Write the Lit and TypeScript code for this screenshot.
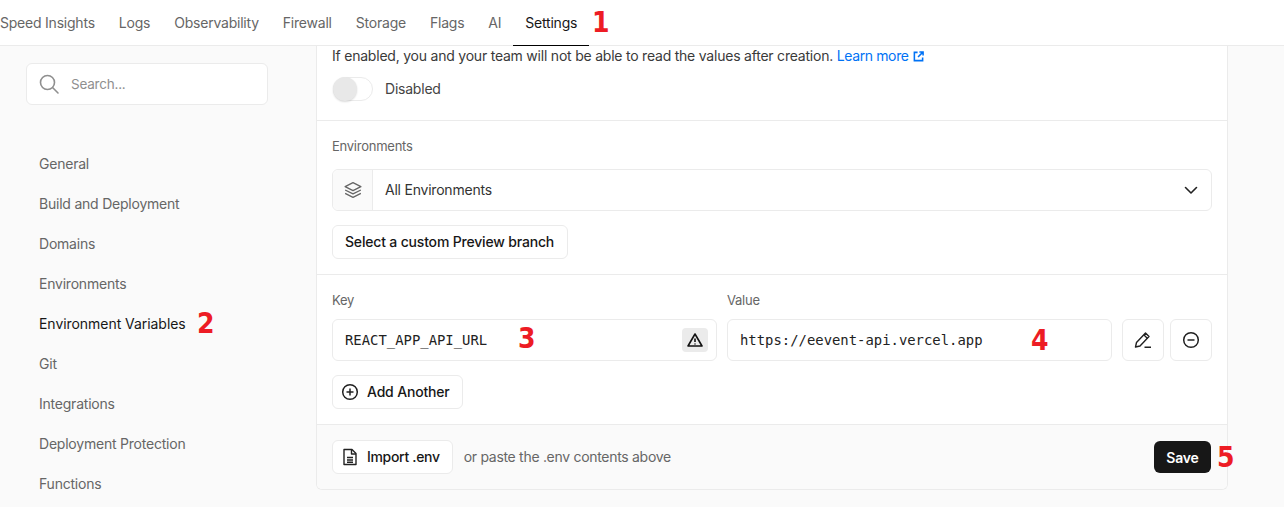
import { LitElement, html, css } from "lit";
import { customElement } from "lit/decorators.js";

const tabs = ["Speed Insights", "Logs", "Observability", "Firewall", "Storage", "Flags", "AI", "Settings"];
const nav = ["General", "Build and Deployment", "Domains", "Environments", "Environment Variables", "Git", "Integrations", "Deployment Protection", "Functions"];

@customElement("app-root")
export class AppRoot extends LitElement {
  static styles = css`
    :host { display: block; position: relative; width: 1284px; height: 507px; overflow: hidden; background: #fafafa; font-family: Inter, "Liberation Sans", sans-serif; font-size: 14px; color: #171717; letter-spacing: -0.22px; }
    svg { display: block; flex: none; }
    .top { height: 45px; background: #fff; border-bottom: 1px solid #ebebeb; display: flex; margin-bottom: 0; }
    .tabs { display: flex; margin-left: -12px; }
    .tab { padding: 0 12px; height: 45px; line-height: 46px; color: #666; white-space: nowrap; box-sizing: content-box; border-bottom: 2px solid transparent; margin-bottom: -1px; }
    .tab.on { color: #171717; border-bottom-color: #000; }
    .body { display: flex; height: 461px; }
    aside { width: 316px; flex: none; padding: 17px 0 0 26px; box-sizing: border-box; }
    .search { width: 242px; height: 42px; box-sizing: border-box; background: #fff; border: 1px solid #ebebeb; border-radius: 6px; display: flex; align-items: center; padding: 0 0 0 11px; gap: 11px; color: #8f8f8f; font-size: 13.5px; }
    .menu { margin: 39px 0 0 13px; display: flex; flex-direction: column; }
    .menu div { height: 40px; line-height: 40px; color: #666; white-space: nowrap; }
    .menu .on { color: #171717; letter-spacing: -0.05px; }
    .card { width: 912px; height: 444px; box-sizing: border-box; background: #fff; border: 1px solid #ebebeb; border-top: 0; border-radius: 0 0 6px 6px; display: flex; flex-direction: column; overflow: hidden; }
    .s1 { height: 75px; box-sizing: border-box; border-bottom: 1px solid #ebebeb; padding: 0 15px; }
    .note { line-height: 20px; color: #3a3a3a; white-space: nowrap; }
    .note a { color: #0072f5; display: inline-flex; align-items: center; gap: 4px; letter-spacing: -0.38px; }
    .toggle { display: flex; align-items: center; gap: 12px; margin: 11px 0 0 1px; color: #444; line-height: 22px; }
    .sw { width: 40px; height: 24px; box-sizing: border-box; border: 1px solid #ebebeb; border-radius: 12px; background: #fff; display: flex; }
    .knob { width: 24px; height: 24px; margin: -1px; border-radius: 50%; background: #e8e8e8; box-shadow: 0 1px 2px rgba(0,0,0,.15); }
    .s2 { height: 154px; box-sizing: border-box; border-bottom: 1px solid #ebebeb; padding: 15px 15px 0; }
    .label { font-size: 13px; line-height: 20px; color: #666; letter-spacing: -0.25px; }
    .select { margin-top: 13px; height: 42px; box-sizing: border-box; border: 1px solid #ebebeb; border-radius: 6px; display: flex; align-items: center; }
    .pre { width: 40px; height: 40px; box-sizing: border-box; background: #fafafa; border-right: 1px solid #ebebeb; border-radius: 6px 0 0 6px; display: flex; align-items: center; justify-content: center; flex: none; }
    .select span { flex: 1; padding: 0 0 2px 12px; color: #333; }
    .select svg.chev { margin-right: 12px; }
    .btn { display: inline-flex; align-items: center; height: 34px; box-sizing: border-box; background: #fff; border: 1px solid #ebebeb; border-radius: 6px; padding: 0 13px 2px 12px; font-weight: 450; letter-spacing: -0.18px; white-space: nowrap; color: #171717; }
    .btn svg { margin-top: 2px; }
    .s2 .btn { margin-top: 14px; }
    .s3 { height: 150px; box-sizing: border-box; border-bottom: 1px solid #ebebeb; padding: 15px 15px 0; }
    .cols { display: flex; gap: 10px; }
    .cols .key { width: 385px; }
    .cols .val { width: 385px; }
    .field { margin-top: 9px; height: 42px; box-sizing: border-box; border: 1px solid #ebebeb; border-radius: 6px; display: flex; align-items: center; justify-content: space-between; padding: 0 8px 0 12px; font-family: "DejaVu Sans Mono", monospace; font-size: 13.9px; letter-spacing: 0; color: #222; white-space: nowrap; }
    .warn { width: 26px; height: 24px; border-radius: 4px; background: #ebebeb; display: flex; align-items: center; justify-content: center; }
    .acts { display: flex; gap: 6px; margin-left: 0; padding-top: 29px; }
    .icon { width: 42px; height: 42px; box-sizing: border-box; border: 1px solid #ebebeb; border-radius: 6px; display: flex; align-items: center; justify-content: center; }
    .s3 .btn { margin-top: 14px; gap: 8px; padding: 0 12px 2px 8px; }
    .foot { flex: 1; background: #fafafa; padding: 0 16px 0 15px; display: flex; align-items: center; }
    .foot .btn { gap: 8px; padding: 0 12px 2px 8px; letter-spacing: -0.32px; }
    .hint { margin-left: 11px; color: #666; flex: 1; letter-spacing: -0.3px; padding-bottom: 2px; }
    .save { height: 32px; width: 57px; box-sizing: border-box; background: #171717; color: #fff; border-radius: 6px; display: flex; align-items: center; justify-content: center; font-weight: 600; font-size: 14px; }
    .mark { position: absolute; color: #ed1c24; font-family: "DejaVu Sans", sans-serif; font-stretch: condensed; font-weight: 700; font-size: 28px; line-height: 28px; letter-spacing: 0; }
  `;

  render() {
    return html`
      <div class="top"><div class="tabs">
        ${tabs.map((t) => html`<div class="tab ${t === "Settings" ? "on" : ""}">${t}</div>`)}
      </div></div>
      <div class="body">
        <aside>
          <div class="search">
            <svg width="22" height="22" viewBox="0 0 22 22" fill="none" stroke="#8f8f8f" stroke-width="1.6"><circle cx="9.5" cy="9.5" r="7"/><path d="M14.8 14.8 L20 20" stroke-linecap="round"/></svg>
            Search...
          </div>
          <div class="menu">
            ${nav.map((n) => html`<div class="${n === "Environment Variables" ? "on" : ""}">${n}</div>`)}
          </div>
        </aside>
        <div class="card">
          <div class="s1">
            <div class="note">If enabled, you and your team will not be able to read the values after creation. <a>Learn more
              <svg width="11" height="11" viewBox="0 0 12 12" fill="none" stroke="#0072f5" stroke-width="1.7"><path d="M5 1.5H1.5v9h9V7M7 1h4v4M11 1 5.5 6.5"/></svg></a></div>
            <div class="toggle"><div class="sw"><div class="knob"></div></div>Disabled</div>
          </div>
          <div class="s2">
            <div class="label">Environments</div>
            <div class="select">
              <div class="pre"><svg width="18" height="18" viewBox="0 0 16 16" fill="none" stroke="#666" stroke-width="1.2" stroke-linejoin="round"><path d="M8 1.5 15 5 8 8.5 1 5Z"/><path d="M1 8l7 3.5L15 8"/><path d="M1 11l7 3.5 7-3.5"/></svg></div>
              <span>All Environments</span>
              <svg class="chev" width="16" height="16" viewBox="0 0 16 16" fill="none" stroke="#222" stroke-width="1.6" stroke-linecap="round" stroke-linejoin="round"><path d="M2.5 5.5 8 11l5.5-5.5"/></svg>
            </div>
            <div class="btn">Select a custom Preview branch</div>
          </div>
          <div class="s3">
            <div class="cols">
              <div class="key"><div class="label">Key</div>
                <div class="field">REACT_APP_API_URL<div class="warn"><svg width="16" height="16" viewBox="0 0 16 16" fill="none" stroke="#111" stroke-width="1.6" stroke-linejoin="round"><path d="M8 2 15 14H1Z"/><path d="M8 6.5v3.5M8 11.4v1"/></svg></div></div>
              </div>
              <div class="val"><div class="label">Value</div>
                <div class="field">https://eevent-api.vercel.app</div>
              </div>
              <div class="acts">
                <div class="icon"><svg width="18" height="18" viewBox="0 0 18 18" fill="none" stroke="#222" stroke-width="1.4" stroke-linejoin="round"><path d="M1.5 16 2.5 11.5 11.5 2 15 5.5 6 15Z"/><path d="M10 4l3.5 3.5M10.5 16.2H17"/></svg></div>
                <div class="icon"><svg width="18" height="18" viewBox="0 0 18 18" fill="none" stroke="#222" stroke-width="1.5"><circle cx="9" cy="9" r="7.3"/><path d="M5.5 9h7"/></svg></div>
              </div>
            </div>
            <div class="btn"><svg width="18" height="18" viewBox="0 0 18 18" fill="none" stroke="#222" stroke-width="1.5"><circle cx="9" cy="9" r="7.3"/><path d="M5.5 9h7M9 5.5v7"/></svg>Add Another</div>
          </div>
          <div class="foot">
            <div class="btn"><svg width="18" height="18" viewBox="0 0 18 18" fill="none" stroke="#222" stroke-width="1.4" stroke-linejoin="round"><path d="M3 1.5h8l4 4v11H3Z"/><path d="M10.5 1.5v4.5H15M6 9.5h6M6 12h6M6 14.2h6"/></svg>Import .env</div>
            <div class="hint">or paste the .env contents above</div>
            <div class="save">Save</div>
          </div>
        </div>
      </div>
      <div class="mark" style="left:592px;top:9px">1</div>
      <div class="mark" style="left:197px;top:310px">2</div>
      <div class="mark" style="left:518px;top:325px">3</div>
      <div class="mark" style="left:1031px;top:327px">4</div>
      <div class="mark" style="left:1217px;top:444px">5</div>
    `;
  }
}
